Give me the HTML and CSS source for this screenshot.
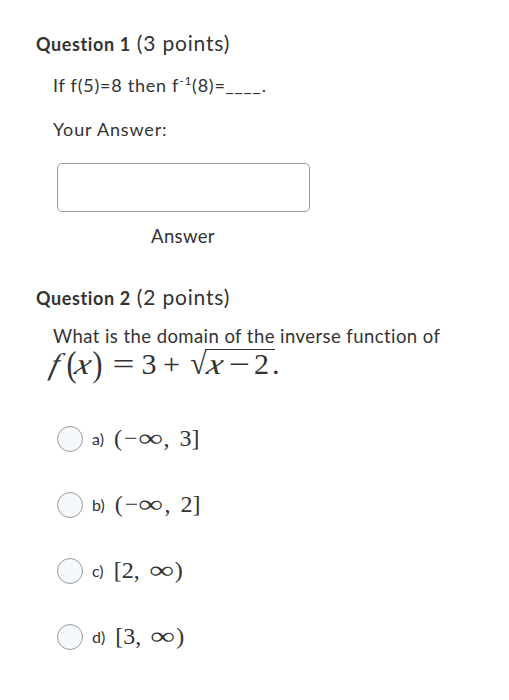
FILE: index.html
```html
<!DOCTYPE html>
<html>
<head>
<meta charset="utf-8">
<link rel="stylesheet" href="styles.css">
</head>
<body>
<div class="page">
  <section class="question q1">
    <h2 class="q-title"><span class="q-name">Question 1</span> <span class="q-points">(3 points)</span></h2>
    <p class="q-text">If f(5)=8 then f<sup>-1</sup>(8)=____.</p>
    <p class="your-answer">Your Answer:</p>
    <div class="answer-box"></div>
    <div class="answer-label">Answer</div>
  </section>
  <section class="question q2">
    <h2 class="q-title"><span class="q-name">Question 2</span> <span class="q-points">(2 points)</span></h2>
    <p class="q-text q2-text">What is the domain of the inverse function of</p>
    <div class="math formula"><span class="g g-f"><i class="it">f</i></span><span class="g g-lp"><span class="paren">(</span></span><span class="g g-x1"><i class="it itx">x</i></span><span class="g g-rp"><span class="paren">)</span></span><span class="g g-eq"><span class="wide-eq">=</span></span><span class="g g-3">3</span><span class="g g-plus">+</span><span class="g g-sqrt"><span class="sqrt">√</span></span><span class="radicand"><span class="g g-x2"><i class="it itx">x</i></span><span class="g g-minus"><span class="wide-minus">−</span></span><span class="g g-2">2</span></span><span class="dot">.</span></div>
    <ul class="options">
      <li class="option"><span class="radio"></span><span class="opt-letter">a)</span><span class="math opt-math">(<span class="minus">−</span><span class="inf">∞</span>,<span class="sp"></span>3]</span></li>
      <li class="option"><span class="radio"></span><span class="opt-letter">b)</span><span class="math opt-math">(<span class="minus">−</span><span class="inf">∞</span>,<span class="sp"></span>2]</span></li>
      <li class="option"><span class="radio"></span><span class="opt-letter">c)</span><span class="math opt-math">[2,<span class="sp"></span><span class="inf">∞</span>)</span></li>
      <li class="option"><span class="radio"></span><span class="opt-letter">d)</span><span class="math opt-math">[3,<span class="sp"></span><span class="inf">∞</span>)</span></li>
    </ul>
  </section>
</div>
</body>
</html>
```
FILE: styles.css
```css
html, body {
  margin: 0;
  padding: 0;
  background: #ffffff;
}
body {
  font-family: Lato, "Open Sans", sans-serif;
  color: #333333;
}
.page {
  padding: 28px 0 0 36px;
}
.question {
  margin: 0;
}
.q-title {
  margin: 0;
  font-weight: normal;
  line-height: 28px;
}
.q-name {
  font-weight: bold;
  font-size: 18px;
  letter-spacing: 0.6px;
}
.q-points {
  font-size: 21px;
  letter-spacing: 0.8px;
}
.q-text {
  margin: 16px 0 0 17px;
  font-size: 18px;
  letter-spacing: 0.75px;
  line-height: 22px;
}
.q-text sup {
  font-size: 12px;
  vertical-align: 7px;
  line-height: 0;
}
.your-answer {
  margin: 22px 0 0 17px;
  font-size: 18px;
  letter-spacing: 0.85px;
  line-height: 22px;
}
.answer-box {
  margin: 23px 0 0 21px;
  width: 251px;
  height: 47px;
  border: 1px solid #9a9a9a;
  border-radius: 5px;
}
.answer-label {
  width: 294px;
  text-align: center;
  font-size: 18.5px;
  letter-spacing: 0.35px;
  line-height: 22px;
  margin: 13px 0 0 0;
}
.q2 {
  margin-top: 35px;
}
.q2-text {
  font-size: 18.5px;
  letter-spacing: 0.43px;
  margin-top: 13px;
}
.math {
  font-family: "Liberation Serif", "Times New Roman", serif;
}

/* formula: each glyph sits centred in its own slot */
.formula {
  margin: 0 0 0 12px;
  font-size: 30px;
  line-height: 34px;
  height: 34px;
  color: #333;
  white-space: nowrap;
}
.g {
  display: inline-flex;
  justify-content: center;
}
.g-f { width: 15px; }
.g-lp { width: 17px; }
.g-x1 { width: 8px; }
.g-rp { width: 19px; }
.g-eq { width: 32px; }
.g-3 { width: 20px; }
.g-plus { width: 25px; margin-right: 8px; }
.g-sqrt { width: 13px; }
.g-x2 { width: 22px; }
.g-minus { width: 24px; }
.g-2 { width: 21px; }
.it {
  display: inline-block;
  font-style: italic;
  transform: skewX(-14deg);
}
.itx {
  transform: skewX(-14deg) scaleX(1.15);
}
.paren {
  display: inline-block;
  transform: scaleY(1.2);
}
.wide-eq {
  display: inline-block;
  transform: scaleX(1.3);
}
.wide-minus {
  display: inline-block;
  transform: scaleX(1.25);
}
.sqrt {
  display: inline-block;
  transform: scaleY(1.05);
}
.radicand {
  display: inline-flex;
  border-top: 1.4px solid #333;
  line-height: 27px;
  padding-right: 3px;
}
.dot {
  margin-left: -3px;
}

/* options */
.options {
  list-style: none;
  margin: 42px 0 0 21px;
  padding: 0;
  display: flex;
  flex-direction: column;
  gap: 35px;
}
.option {
  display: flex;
  align-items: center;
  height: 31px;
}
.radio {
  width: 26px;
  height: 26px;
  border-radius: 50%;
  border: 1px solid #9b9b9b;
  background: #f6f9fc;
  box-sizing: border-box;
  margin-right: 9px;
}
.opt-letter {
  font-size: 16px;
  margin-right: 10px;
}
.opt-math {
  font-size: 24px;
  white-space: nowrap;
}
.minus {
  margin: 0 1px 0 2px;
}
.inf {
  display: inline-block;
  transform: scaleX(1.45);
  margin: 0 5px 0 3px;
}
.sp {
  display: inline-block;
  width: 10px;
}
```
